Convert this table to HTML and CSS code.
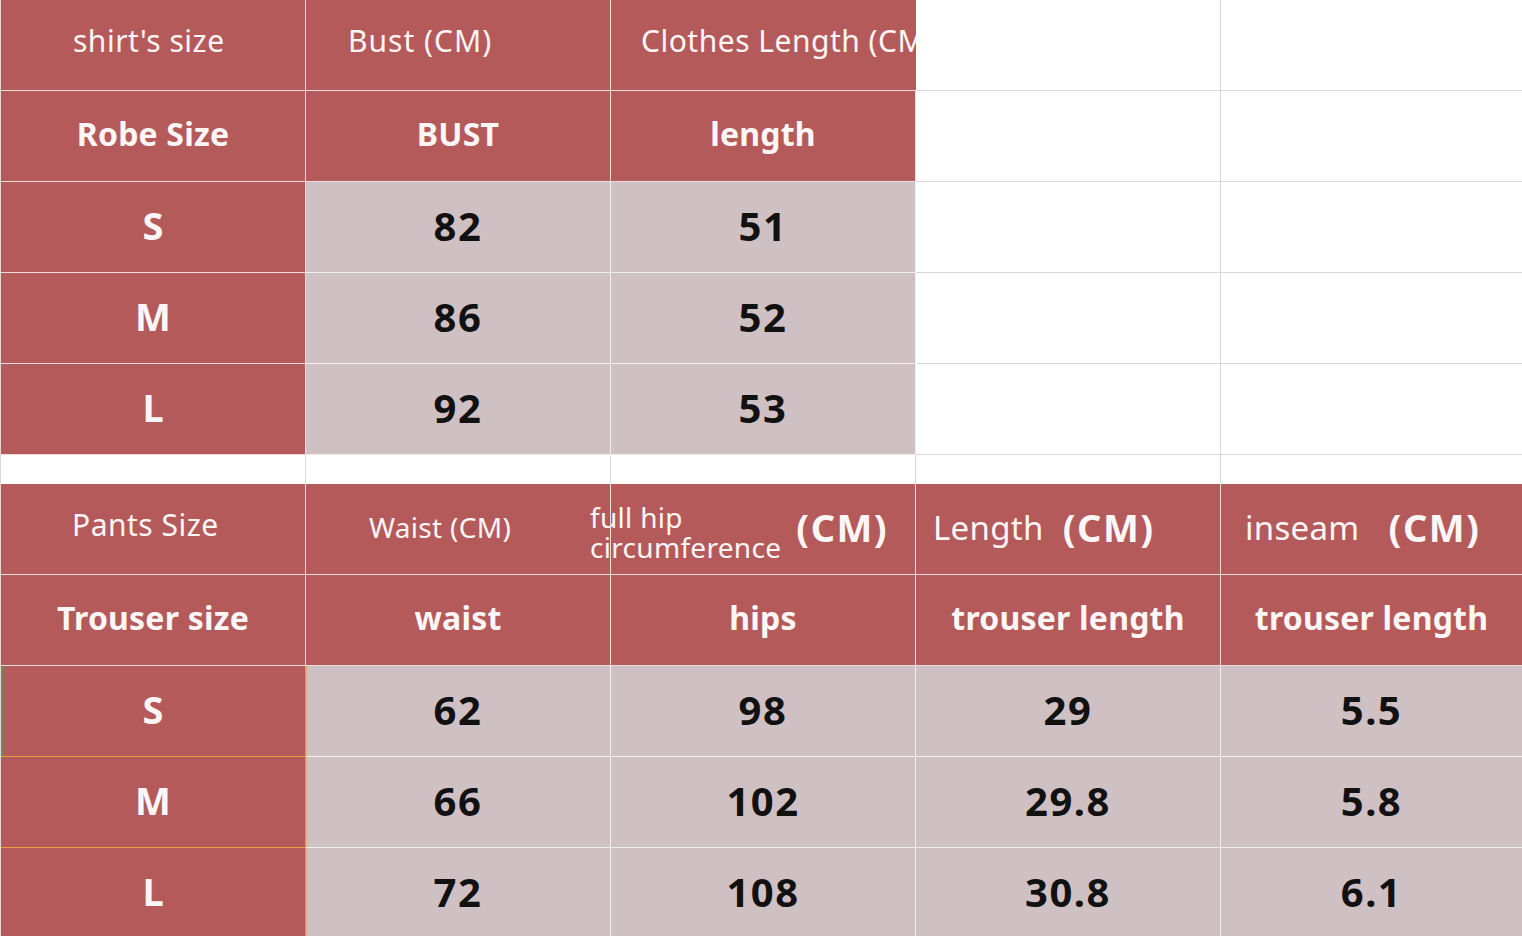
FILE: index.html
```html
<!DOCTYPE html>
<html>
<head>
<meta charset="utf-8">
<link rel="stylesheet" href="styles.css">
</head>
<body>
<div class="sheet">
  <!-- top table row 1 -->
  <div class="c red hl p-shirt">shirt's size</div>
  <div class="c red hl p-bust">Bust (CM)</div>
  <div class="c red hl p-clothes clip">Clothes Length (CM)</div>
  <div class="c blank"></div>
  <div class="c blank"></div>
  <!-- row 2 -->
  <div class="c red hb">Robe Size</div>
  <div class="c red hb">BUST</div>
  <div class="c red hb">length</div>
  <div class="c blank"></div>
  <div class="c blank"></div>
  <!-- S -->
  <div class="c red hb size">S</div>
  <div class="c pink num">82</div>
  <div class="c pink num">51</div>
  <div class="c blank"></div>
  <div class="c blank"></div>
  <!-- M -->
  <div class="c red hb size">M</div>
  <div class="c pink num">86</div>
  <div class="c pink num">52</div>
  <div class="c blank"></div>
  <div class="c blank"></div>
  <!-- L -->
  <div class="c red hb size">L</div>
  <div class="c pink num">92</div>
  <div class="c pink num">53</div>
  <div class="c blank"></div>
  <div class="c blank"></div>
  <!-- gap -->
  <div class="c gap"></div>
  <div class="c gap"></div>
  <div class="c gap"></div>
  <div class="c gap"></div>
  <div class="c gap"></div>
  <!-- bottom table header -->
  <div class="c red hl p-pants">Pants Size</div>
  <div class="c red hl p-waist">Waist (CM)</div>
  <div class="c red hl hip">
    <span class="hip-text">full hip<br>circumference</span>
    <span class="cm cm-hip">(CM)</span>
  </div>
  <div class="c red hl p-len"><span>Length</span><span class="cm cm-len">(CM)</span></div>
  <div class="c red hl p-inseam"><span>inseam</span><span class="cm cm-inseam">(CM)</span></div>
  <!-- row 2 -->
  <div class="c red hb">Trouser size</div>
  <div class="c red hb">waist</div>
  <div class="c red hb">hips</div>
  <div class="c red hb">trouser length</div>
  <div class="c red hb">trouser length</div>
  <!-- S -->
  <div class="c red hb size sel sel-first">S</div>
  <div class="c pink num">62</div>
  <div class="c pink num">98</div>
  <div class="c pink num">29</div>
  <div class="c pink num">5.5</div>
  <!-- M -->
  <div class="c red hb size sel">M</div>
  <div class="c pink num">66</div>
  <div class="c pink num">102</div>
  <div class="c pink num">29.8</div>
  <div class="c pink num">5.8</div>
  <!-- L -->
  <div class="c red hb size sel">L</div>
  <div class="c pink num">72</div>
  <div class="c pink num">108</div>
  <div class="c pink num">30.8</div>
  <div class="c pink num">6.1</div>
</div>
</body>
</html>
```

FILE: styles.css
```css
html, body {
  margin: 0;
  padding: 0;
  background: #ffffff;
  overflow: hidden;
}

.sheet {
  display: grid;
  grid-template-columns: 305px 305px 305px 305px 302px;
  grid-template-rows: 91px 91px 91px 91px 91px 29px 91px 91px 91px 91px 91px;
  border-left: 1px solid #e4d6d8;
  width: 1521px;
  font-family: "Noto Sans", "Liberation Sans", sans-serif;
}

.c {
  box-sizing: border-box;
  border-right: 1px solid #e9dcdc;
  border-bottom: 1px solid #e9dcdc;
  display: flex;
  align-items: center;
  justify-content: center;
  white-space: nowrap;
  position: relative;
}

.red {
  background: #b55a5a;
  color: #fdf6f6;
  border-color: #eadcdc;
}

.pink {
  background: #cfc0c4;
  color: #111111;
  border-color: #f1eced;
}

.blank {
  background: #ffffff;
  border-color: #d6d8de;
}

.gap {
  background: #ffffff;
  border-right-color: #d6d8de;
  border-bottom: none;
}

.hl {
  justify-content: flex-start;
  font-size: 30px;
  font-weight: 400;
  letter-spacing: 0.5px;
  padding-bottom: 10px;
}

.hb {
  font-size: 32px;
  font-weight: 700;
  letter-spacing: 0.2px;
  padding-bottom: 5px;
}

.num {
  font-size: 40px;
  font-weight: 700;
  letter-spacing: 1.5px;
  padding-bottom: 4px;
}

.size {
  font-size: 38px;
  letter-spacing: 0;
}

.clip {
  overflow: hidden;
  border-right: none;
}

.p-shirt { padding-left: 72px; }
.p-bust { padding-left: 42px; letter-spacing: 1px; }
.p-clothes { padding-left: 30px; }
.p-pants { padding-left: 71px; }
.p-waist { padding-left: 63px; font-size: 28px; letter-spacing: 0.3px; padding-bottom: 4px; }
.p-len { padding-left: 17px; padding-bottom: 4px; font-size: 33px; letter-spacing: 0.3px; }
.p-inseam { padding-left: 24px; padding-bottom: 4px; font-size: 33px; letter-spacing: 0.3px; }

.hip {
  padding-left: 0;
  padding-bottom: 4px;
}

.hip::after {
  content: "";
  position: absolute;
  left: -1px;
  top: 0;
  bottom: 0;
  width: 1px;
  background: #eadcdc;
}

.hip-text {
  font-size: 28px;
  line-height: 30px;
  letter-spacing: 0.3px;
  margin-left: -21px;
  margin-top: 10px;
  white-space: nowrap;
}

.cm {
  font-weight: 700;
  font-size: 38px;
  letter-spacing: 1.5px;
}

.cm-hip { margin-left: 15px; }
.cm-len { margin-left: 19px; }
.cm-inseam { margin-left: 29px; }

.sel {
  border-right: 1px solid #f09a3c;
  border-bottom-color: #f09a3c;
}

.sel + .pink {
  box-shadow: inset 1px 0 0 rgba(240, 154, 60, 0.5);
}

.sel-first {
  box-shadow: inset 2px 0 0 #6f8a4e;
}
```
